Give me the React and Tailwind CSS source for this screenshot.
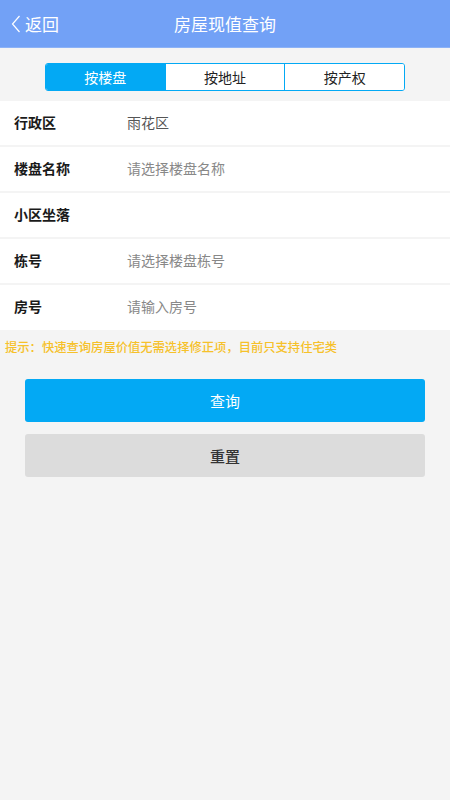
import React from 'react';

const rows = [
  { label: '行政区', value: '雨花区', filled: true },
  { label: '楼盘名称', value: '请选择楼盘名称' },
  { label: '小区坐落', value: '' },
  { label: '栋号', value: '请选择楼盘栋号' },
  { label: '房号', value: '请输入房号' },
];

const tabs = ['按楼盘', '按地址', '按产权'];

const App = () => {
  return (
    <div
      className="w-[450px] h-[800px] bg-[#f4f4f4] flex flex-col"
      style={{ fontFamily: '"Noto Sans CJK SC", "Noto Sans", sans-serif' }}
    >
      <div className="h-[48px] bg-[#72a1f6] border-b border-[#8cb2f7] flex items-center relative text-white">
        <div className="flex items-center pl-[11px]">
          <svg width="10" height="18" viewBox="0 0 10 18" fill="none">
            <path d="M8.5 1 L1.5 9 L8.5 17" stroke="white" strokeWidth="1.2" />
          </svg>
          <span className="text-[17px] ml-[4px] leading-none">返回</span>
        </div>
        <div className="absolute left-0 right-0 text-center text-[17px] leading-none pointer-events-none">
          房屋现值查询
        </div>
      </div>

      <div className="flex justify-center pt-[15px] pb-[10px]">
        <div className="flex w-[360px] h-[28px] border border-[#03a9f4] rounded-[3px] overflow-hidden">
          {tabs.map((t, i) => (
            <div
              key={t}
              className={
                'flex-1 flex items-center justify-center text-[14px] ' +
                (i === 0 ? 'bg-[#03a9f4] text-white' : 'bg-white text-[#222] border-l border-[#03a9f4]')
              }
            >
              {t}
            </div>
          ))}
        </div>
      </div>

      <div className="flex flex-col gap-[2px]">
        {rows.map((r, i) => (
          <div
            key={r.label}
            className={'bg-white flex items-center pb-[2px] ' + (i === rows.length - 1 ? 'h-[45px]' : 'h-[44px]')}
          >
            <div className="w-[127px] pl-[14px] text-[14px] font-bold text-[#1a1a1a]">{r.label}</div>
            <div className={'text-[14px] ' + (r.filled ? 'text-[#555]' : 'text-[#888]')}>{r.value}</div>
          </div>
        ))}
      </div>

      <div className="pl-[5px] pt-[11px] text-[12.3px] font-medium text-[#f6c12a] leading-none">
        提示：快速查询房屋价值无需选择修正项，目前只支持住宅类
      </div>

      <div className="px-[25px] pt-[26px] flex flex-col gap-[12px]">
        <div className="h-[43px] bg-[#03a9f4] rounded-[3px] flex items-center justify-center text-white text-[15px]">
          查询
        </div>
        <div className="h-[43px] bg-[#dcdcdc] rounded-[3px] flex items-center justify-center text-[#333] text-[15px] font-medium">
          重置
        </div>
      </div>
    </div>
  );
};

export default App;
